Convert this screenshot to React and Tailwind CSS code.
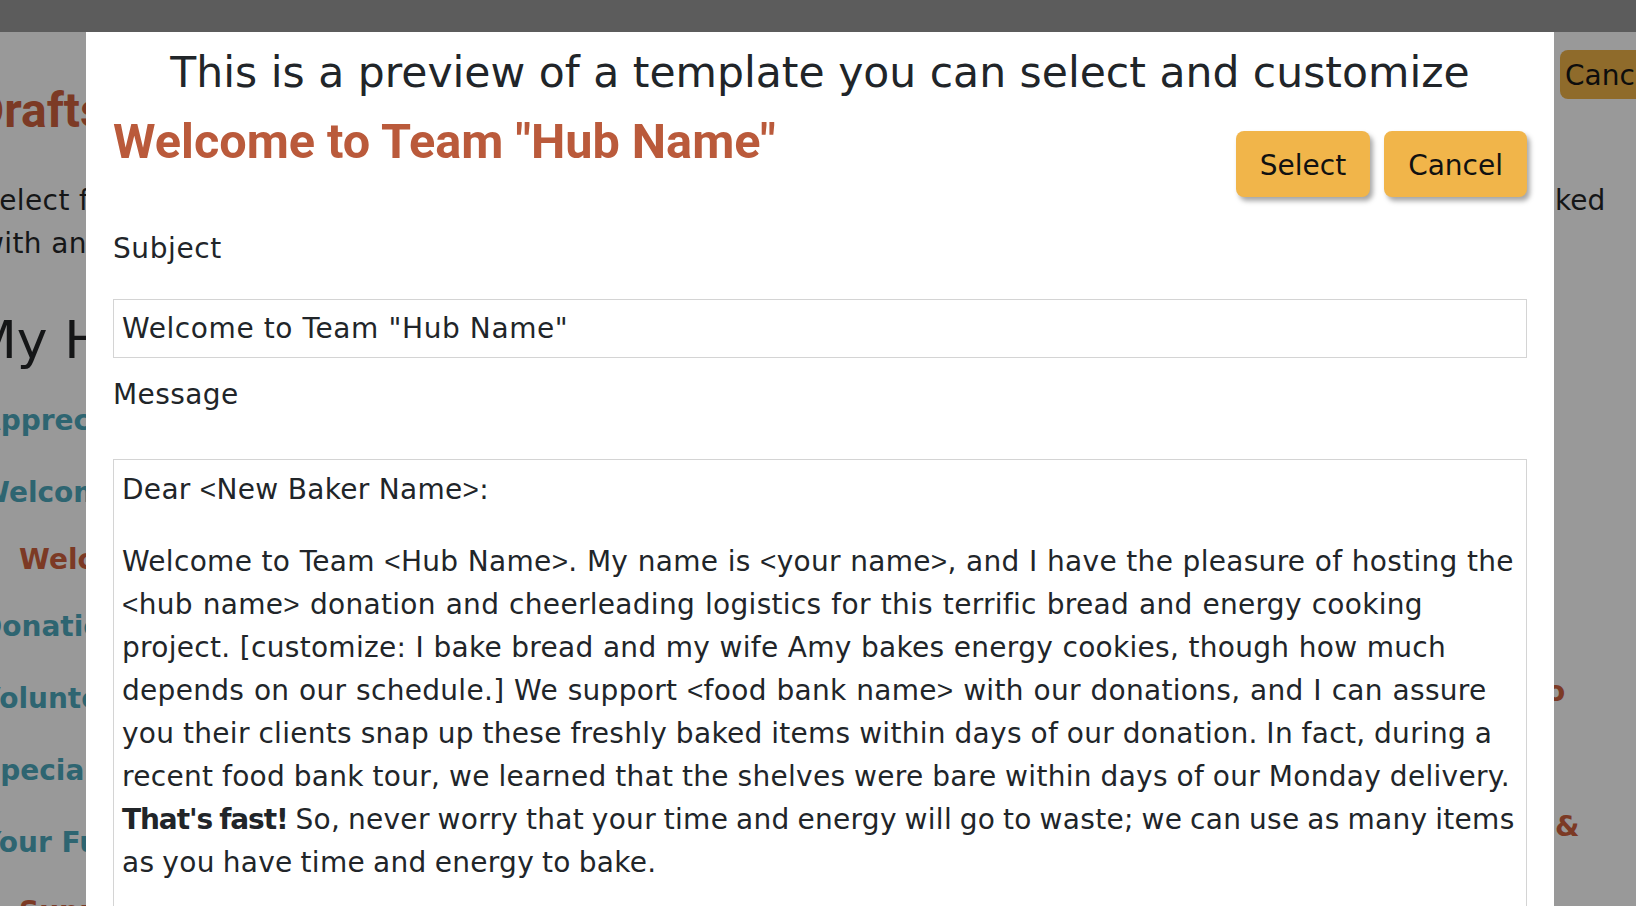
function T({ s }) {
  const parts = s.split(/([<>])/);
  return (
    <>
      {parts.map((p, i) =>
        p === "<" || p === ">" ? (
          <span key={i} className="font-['Liberation_Sans',sans-serif]">
            {p}
          </span>
        ) : (
          <span key={i}>{p}</span>
        )
      )}
    </>
  );
}

export default function App() {
  const lines = [
    { c: "[word-spacing:0.2px]", t: <T s="Welcome to Team <Hub Name>. My name is <your name>, and I have the pleasure of hosting the" /> },
    { c: "[word-spacing:0.7px]", t: <T s="<hub name> donation and cheerleading logistics for this terrific bread and energy cooking" /> },
    { c: "[word-spacing:0.1px]", t: <T s="project. [customize: I bake bread and my wife Amy bakes energy cookies, though how much" /> },
    { c: "[word-spacing:0.5px]", t: <T s="depends on our schedule.] We support <food bank name> with our donations, and I can assure" /> },
    { c: "[word-spacing:-0.55px]", t: <T s="you their clients snap up these freshly baked items within days of our donation. In fact, during a" /> },
    { c: "[word-spacing:-0.5px]", t: <T s="recent food bank tour, we learned that the shelves were bare within days of our Monday delivery." /> },
    {
      c: "[word-spacing:-1.4px]",
      t: (
        <>
          <span className="font-bold tracking-[-1.1px]">That's fast!</span> So, never worry that your time and energy
          will go to waste; we can use as many items
        </>
      ),
    },
    { c: "[word-spacing:-1.2px]", t: <T s="as you have time and energy to bake." /> },
  ];

  return (
    <div className="relative h-[906px] w-full overflow-hidden bg-[#999999] font-['DejaVu_Sans',sans-serif] text-[#151617]">
      <div className="h-[32px] bg-[#5c5c5c]" />

      {/* dimmed page behind the dialog */}
      <div className="flex justify-between">
        <div className="flex w-[300px] flex-col whitespace-nowrap">
          <div className="ml-[-27px] mt-[49px] font-['Roboto',sans-serif] text-[48px] font-bold leading-[60px] text-[#7c3a25]">
            Drafts
          </div>
          <div className="ml-[-19px] mt-[38px] text-[28px] leading-[43px] tracking-[0.4px]">
            Select from the templates below
            <br />
            with an eye to your hub
          </div>
          <div className="ml-[-28px] mt-[44px] text-[52px] leading-[62px]">My Hubs</div>
          <div className="ml-[-21px] mt-[28px] text-[28px] font-bold leading-[43px] text-[#2e6571]">Appreciation</div>
          <div className="ml-[-21px] mt-[29px] text-[28px] font-bold leading-[43px] text-[#2e6571]">Welcome</div>
          <div className="ml-[19px] mt-[24px] text-[28px] font-bold leading-[43px] text-[#7c3a25]">Welcome</div>
          <div className="ml-[-21px] mt-[24px] text-[28px] font-bold leading-[43px] text-[#2e6571]">Donations</div>
          <div className="ml-[-21px] mt-[29px] text-[28px] font-bold leading-[43px] text-[#2e6571]">Volunteers</div>
          <div className="ml-[-20px] mt-[29px] text-[28px] font-bold leading-[43px] text-[#2e6571]">Special</div>
          <div className="ml-[-19px] mt-[29px] text-[28px] font-bold leading-[43px] text-[#2e6571]">Your Funds</div>
          <div className="ml-[19px] mt-[26px] text-[28px] font-bold leading-[43px] text-[#7c3a25]">Support</div>
        </div>
        <div className="flex w-[82px] flex-col whitespace-nowrap">
          <div className="ml-[6px] mt-[18px] flex h-[49px] w-[120px] items-center rounded-lg bg-[#8f6b2b] pl-[5px] pt-[3px] text-[28px] text-[#0d0d0d]">
            Cancel
          </div>
          <div className="ml-[1px] mt-[80px] text-[28px] leading-[43px]">ked</div>
          <div className="ml-[-8px] mt-[448px] text-[28px] font-bold leading-[43px] text-[#7c3a25]">o</div>
          <div className="ml-[1px] mt-[92px] text-[28px] font-bold leading-[43px] text-[#7c3a25]">&amp;</div>
        </div>
      </div>

      {/* dialog */}
      <div className="absolute bottom-0 left-[86px] top-[32px] w-[1468px] bg-white px-[27px] pt-[16px] text-[#212529]">
        <h2 className="text-center text-[42.5px] leading-[50px]">
          This is a preview of a template you can select and customize
        </h2>
        <div className="mt-[15px] flex items-start justify-between">
          <h1 className="font-['Roboto',sans-serif] text-[48.6px] font-bold leading-[58px] text-[#ba5a3b]">
            Welcome to Team "Hub Name"
          </h1>
          <div className="mt-[18px] flex gap-[14px]">
            <button className="h-[66px] rounded-lg bg-[#f1b54a] px-6 pt-[3px] text-[28px] text-[#111111] shadow-[3px_4px_5px_rgba(0,0,0,0.35)]">
              Select
            </button>
            <button className="h-[66px] rounded-lg bg-[#f1b54a] px-6 pt-[3px] text-[28px] text-[#111111] shadow-[3px_4px_5px_rgba(0,0,0,0.35)]">
              Cancel
            </button>
          </div>
        </div>
        <div className="mt-[30px] text-[28px] leading-[43px] tracking-[0.6px]">Subject</div>
        <div className="mt-[29px] h-[59px] border border-[#d4d4d4] pl-[8px] text-[28px] leading-[57px] tracking-[0.6px]">
          Welcome to Team "Hub Name"
        </div>
        <div className="mt-[15px] text-[28px] leading-[43px] tracking-[0.4px]">Message</div>
        <div className="mt-[43px] h-[520px] border border-[#d4d4d4] px-[8px] pt-[8px] text-[28px] leading-[43px] tracking-[0.3px]">
          <p className="mb-[29px]">
            <T s="Dear <New Baker Name>:" />
          </p>
          <p className="whitespace-nowrap">
            {lines.map((l, i) => (
              <span key={i} className={l.c}>
                {l.t}
                <br />
              </span>
            ))}
          </p>
        </div>
      </div>
    </div>
  );
}
